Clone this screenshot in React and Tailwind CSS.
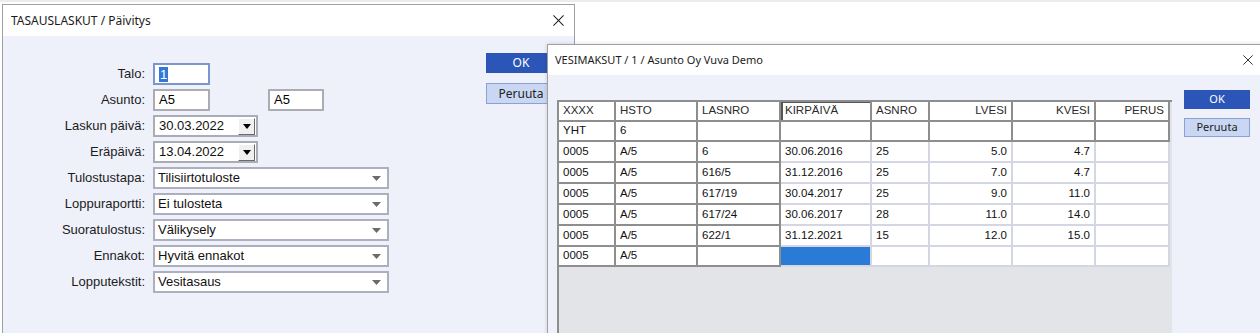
import React from 'react'

const ARIAL = "font-['Liberation_Sans',Arial,sans-serif]"
const UI = "font-['Noto_Sans','Open_Sans',sans-serif]"

const DARK = 'border-[#8e8e8e]'
const LIGHT = 'border-[#d4d6e4]'

const columns = [
  { title: 'XXXX', w: 'w-[57px]' },
  { title: 'HSTO', w: 'w-[82px]' },
  { title: 'LASNRO', w: 'w-[83px]' },
  { title: 'KIRPÄIVÄ', w: 'w-[91px]' },
  { title: 'ASNRO', w: 'w-[58px]' },
  { title: 'LVESI', w: 'w-[83px]', right: true },
  { title: 'KVESI', w: 'w-[83px]', right: true },
  { title: 'PERUS', w: 'w-[74px]', right: true },
]

const rows = [
  { h: 'h-[20px]', cells: ['YHT', '6', '', '', '', '', '', ''] },
  { h: 'h-[21px]', cells: ['0005', 'A/5', '6', '30.06.2016', '25', '5.0', '4.7', ''] },
  { h: 'h-[21px]', cells: ['0005', 'A/5', '616/5', '31.12.2016', '25', '7.0', '4.7', ''] },
  { h: 'h-[21px]', cells: ['0005', 'A/5', '617/19', '30.04.2017', '25', '9.0', '11.0', ''] },
  { h: 'h-[21px]', cells: ['0005', 'A/5', '617/24', '30.06.2017', '28', '11.0', '14.0', ''] },
  { h: 'h-[21px]', cells: ['0005', 'A/5', '622/1', '31.12.2021', '15', '12.0', '15.0', ''] },
  { h: 'h-[20px]', cells: ['0005', 'A/5', '', '', '', '', '', ''], selected: 3 },
]

function CloseX({ size }) {
  return (
    <svg width={size} height={size} viewBox="0 0 12 12">
      <path d="M0.5 0.5L11.5 11.5M11.5 0.5L0.5 11.5" stroke="#1f1f1f" strokeWidth="1.1" />
    </svg>
  )
}

function DateField({ value }) {
  return (
    <div className="w-[105px] h-[22px] border-2 border-[#acacb4] bg-white flex items-center pl-[4px] pr-[1px]">
      <span className="flex-1 text-[13px] text-[#111]">{value}</span>
      <div className="w-[17px] h-[17px] bg-[#f0f0f0] border border-t-white border-l-white border-b-[#6a6a6a] border-r-[#6a6a6a] flex items-center justify-center">
        <svg width="8" height="5" viewBox="0 0 8 5"><path d="M0 0H8L4 5Z" fill="#000" /></svg>
      </div>
    </div>
  )
}

function SelectField({ value }) {
  return (
    <div className="w-[236px] h-[22px] border-2 border-[#acb0be] bg-white flex items-center pl-[3px] pr-[6px]">
      <span className="flex-1 text-[13px] text-[#111]">{value}</span>
      <svg width="9" height="5" viewBox="0 0 9 5"><path d="M0 0H9L4.5 5Z" fill="#6b6b6b" /></svg>
    </div>
  )
}

function Row({ label, children }) {
  return (
    <div className="flex items-center gap-[8px] h-[22px]">
      <span className="w-[142px] text-right text-[13px] text-[#1c1c1c]">{label}</span>
      {children}
    </div>
  )
}

function Grid() {
  return (
    <div className={`w-[615px] h-[240px] bg-[#e3e4e8] border-l-2 border-t-2 ${DARK} ${ARIAL} text-[11.5px] text-[#111]`}>
      <div className="flex">
        {columns.map((c, i) => (
          <div
            key={i}
            className={`${c.w} h-[20px] border-r-2 border-b-2 ${DARK} bg-white flex items-center px-[4px] text-[#2a2a2a] ${c.right ? 'justify-end' : ''} ${i === 3 ? 'shadow-[inset_2px_0_0_#555,inset_0_1px_0_#555]' : ''}`}
          >
            {c.title}
          </div>
        ))}
      </div>
      {rows.map((r, ri) => (
        <div key={ri} className="flex">
          {r.cells.map((v, ci) => {
            const c = columns[ci]
            const dark = ci <= 2 || ri === 0
            const sel = r.selected === ci
            return (
              <div
                key={ci}
                className={`${c.w} ${r.h} border-r-2 border-b-2 ${dark ? DARK : LIGHT} ${sel ? 'bg-[#2a7bd6]' : 'bg-white'} flex px-[4px] ${c.right ? 'justify-end items-start pt-[1px]' : 'items-center'}`}
              >
                {v}
              </div>
            )
          })}
        </div>
      ))}
    </div>
  )
}

export default function App() {
  return (
    <div className="relative w-[1260px] h-[333px] overflow-hidden bg-white border-t-2 border-[#ececec]">
      {/* TASAUSLASKUT window */}
      <div className="absolute left-[2px] top-[2px] w-[573px] h-[340px] border border-[#a0a0a0] bg-[#eef1fa] flex flex-col">
        <div className={`h-[31px] bg-white flex items-center justify-between pl-[8px] pr-[10px] ${UI}`}>
          <span className="text-[12px] text-[#1b1b1b]">TASAUSLASKUT / Päivitys</span>
          <CloseX size={11} />
        </div>
        <div className={`flex ${ARIAL}`}>
          <div className="w-[483px] pt-[27px] flex flex-col gap-[4px]">
            <Row label="Talo:">
              <div className="w-[57px] h-[22px] border-2 border-[#7b95cf] bg-white flex items-center pl-[4px]">
                <span className="bg-[#3278d8] text-white text-[13px] leading-[15px] px-[1px]">1</span>
              </div>
            </Row>
            <Row label="Asunto:">
              <div className="w-[57px] h-[22px] border-2 border-[#acacb4] bg-white flex items-center pl-[4px] text-[13px]">A5</div>
              <div className="ml-[50px] w-[56px] h-[22px] border-2 border-[#acacb4] bg-white flex items-center pl-[4px] text-[13px]">A5</div>
            </Row>
            <Row label="Laskun päivä:"><DateField value="30.03.2022" /></Row>
            <Row label="Eräpäivä:"><DateField value="13.04.2022" /></Row>
            <Row label="Tulostustapa:"><SelectField value="Tilisiirtotuloste" /></Row>
            <Row label="Loppuraportti:"><SelectField value="Ei tulosteta" /></Row>
            <Row label="Suoratulostus:"><SelectField value="Välikysely" /></Row>
            <Row label="Ennakot:"><SelectField value="Hyvitä ennakot" /></Row>
            <Row label="Lopputekstit:"><SelectField value="Vesitasaus" /></Row>
          </div>
          <div className={`pt-[17px] flex flex-col gap-[10px] ${UI}`}>
            <button className="w-[70px] h-[20px] bg-[#2b56b8] text-white text-[12px] flex items-center justify-center">OK</button>
            <button className="w-[70px] h-[21px] bg-[#c9d7f3] border border-[#8aa0d6] text-[#222] text-[12px] flex items-center justify-center">Peruuta</button>
          </div>
        </div>
      </div>

      {/* VESIMAKSUT window */}
      <div className="absolute left-[547px] top-[42px] w-[719px] h-[300px] border border-[#a0a0a0] bg-[#eef1fa] flex flex-col shadow-[0_0_4px_rgba(0,0,0,0.15)]">
        <div className={`h-[30px] bg-white flex items-center justify-between pl-[7px] pr-[12px] ${UI}`}>
          <span className="text-[11px] text-[#1b1b1b]">VESIMAKSUT / 1 / Asunto Oy Vuva Demo</span>
          <CloseX size={10} />
        </div>
        <div className="flex pl-[9px]">
          <div className="pt-[25px]">
            <Grid />
          </div>
          <div className={`ml-[12px] pt-[15px] flex flex-col gap-[9px] ${UI}`}>
            <button className="w-[66px] h-[19px] bg-[#2b56b8] text-white text-[11px] flex items-center justify-center">OK</button>
            <button className="w-[66px] h-[19px] bg-[#c9d7f3] border border-[#8aa0d6] text-[#222] text-[11px] flex items-center justify-center">Peruuta</button>
          </div>
        </div>
      </div>
    </div>
  )
}
